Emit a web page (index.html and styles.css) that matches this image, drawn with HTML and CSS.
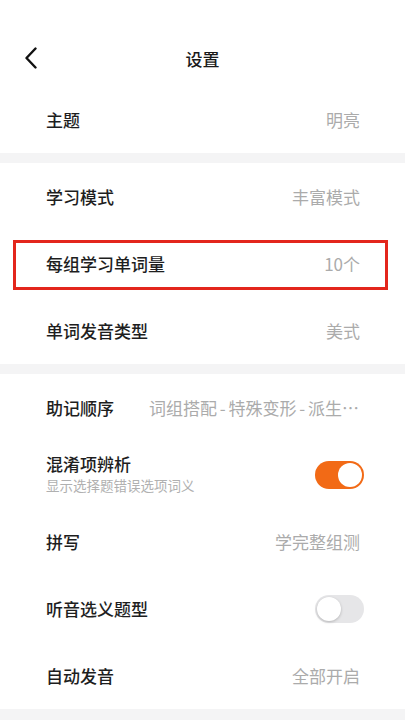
FILE: index.html
```html
<!DOCTYPE html>
<html lang="zh-CN">
<head>
  <meta charset="UTF-8">
  <meta name="viewport" content="width=device-width, initial-scale=1.0">
  <title>设置</title>
  <link rel="stylesheet" href="styles.css">
</head>
<body>
  <div class="page">
    <div class="group">
      <div class="topbar">
        <button class="back-button" aria-label="返回">
          <svg width="14" height="22" viewBox="0 0 14 22">
            <path d="M11.5 1.5 L2.5 11 L11.5 20.5" fill="none" stroke="#111" stroke-width="2.4" stroke-linecap="round" stroke-linejoin="round"/>
          </svg>
        </button>
        <h1>设置</h1>
      </div>
      <div class="row">
        <span class="label">主题</span>
        <span class="value">明亮</span>
      </div>
    </div>

    <div class="group">
      <div class="row">
        <span class="label">学习模式</span>
        <span class="value">丰富模式</span>
      </div>
      <div class="row marked">
        <span class="label">每组学习单词量</span>
        <span class="value">10个</span>
      </div>
      <div class="row">
        <span class="label">单词发音类型</span>
        <span class="value">美式</span>
      </div>
    </div>

    <div class="group">
      <div class="row">
        <span class="label">助记顺序</span>
        <span class="value long">词组搭配 - 特殊变形 - 派生词 - 近义词</span>
      </div>
      <div class="row">
        <div class="label-stack">
          <span class="label">混淆项辨析</span>
          <span class="hint">显示选择题错误选项词义</span>
        </div>
        <span class="switch on"></span>
      </div>
      <div class="row">
        <span class="label">拼写</span>
        <span class="value">学完整组测</span>
      </div>
      <div class="row">
        <span class="label">听音选义题型</span>
        <span class="switch"></span>
      </div>
      <div class="row">
        <span class="label">自动发音</span>
        <span class="value">全部开启</span>
      </div>
    </div>
  </div>
</body>
</html>
```

FILE: styles.css
```css
body {
  margin: 0;
  background-color: #f4f4f5;
  font-family: "Noto Sans CJK SC", "Noto Sans", sans-serif;
  color: #1e1e1e;
}

.page {
  width: 405px;
  height: 720px;
  overflow: hidden;
}

.group {
  background-color: #fff;
  margin-bottom: 10px;
}

.topbar {
  position: relative;
  height: 56px;
  padding-top: 30px;
  display: flex;
  align-items: center;
  justify-content: center;
}

.topbar h1 {
  margin: 0;
  font-size: 17px;
  font-weight: 500;
  color: #1a1a1a;
}

.back-button {
  position: absolute;
  left: 24px;
  top: 47px;
  padding: 0;
  border: none;
  background: none;
  display: flex;
}

.row {
  position: relative;
  height: 67px;
  padding: 0 45px 0 46px;
  display: flex;
  align-items: center;
  justify-content: space-between;
}

.label {
  font-size: 17px;
  font-weight: 500;
  white-space: nowrap;
  flex-shrink: 0;
}

.value {
  font-size: 17px;
  color: #ababab;
  white-space: nowrap;
}

.value.long {
  flex: 1;
  min-width: 0;
  margin-left: 35px;
  overflow: hidden;
  text-overflow: ellipsis;
  text-align: right;
  word-spacing: -1px;
}

.label-stack {
  display: flex;
  flex-direction: column;
  margin-top: -2px;
}

.label-stack .label {
  line-height: 22px;
}

.hint {
  font-size: 13.5px;
  color: #b0b0b0;
  line-height: 20px;
}

/* red frame drawn around the highlighted row */
.row.marked::after {
  content: "";
  position: absolute;
  left: 13px;
  right: 17px;
  top: 10px;
  bottom: 7px;
  border: 3px solid #e3261c;
}

.switch {
  position: relative;
  width: 49px;
  height: 28px;
  margin-right: -4px;
  border-radius: 14px;
  background-color: #e6e6e8;
  flex-shrink: 0;
}

.switch::after {
  content: "";
  position: absolute;
  top: 2px;
  left: 2px;
  width: 24px;
  height: 24px;
  border-radius: 50%;
  background-color: #fff;
  box-shadow: 0 1px 3px rgba(0, 0, 0, 0.22);
}

.switch.on {
  background-color: #f26a16;
}

.switch.on::after {
  left: 23px;
  box-shadow: none;
}
```
